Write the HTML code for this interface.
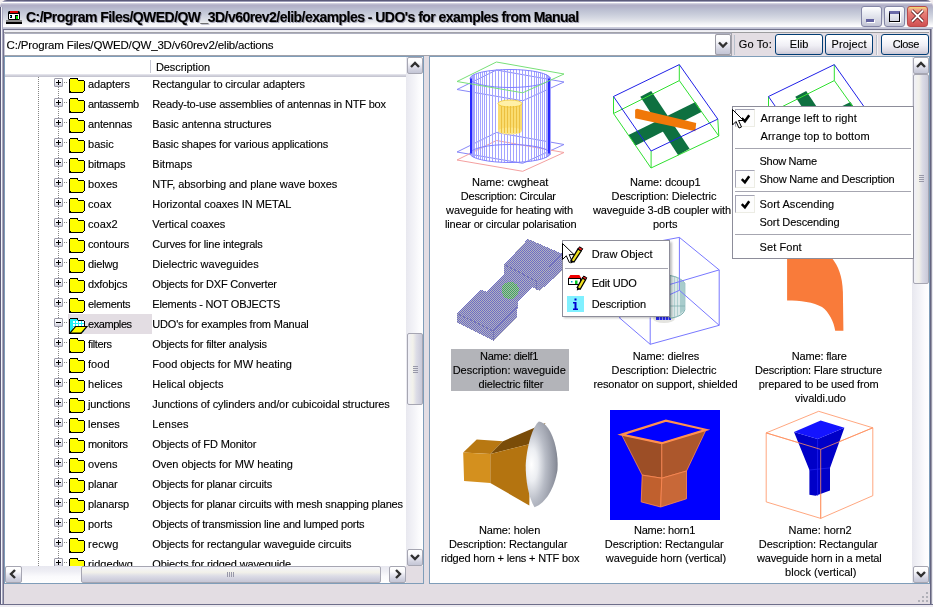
<!DOCTYPE html><html><head><meta charset="utf-8"><style>
*{margin:0;padding:0;box-sizing:border-box}
html,body{width:933px;height:607px;overflow:hidden;background:#f3eef0}
#root{position:absolute;left:0;top:0;width:933px;height:607px;will-change:transform}
body{position:relative;font-family:"Liberation Sans",sans-serif;font-size:11px;color:#000;-webkit-text-stroke:0.12px #000}
.a{position:absolute}
.t{white-space:pre;letter-spacing:-0.22px;line-height:20px}
.cap{position:absolute;text-align:center;white-space:pre;letter-spacing:-0.22px;line-height:14px}
.mi{white-space:pre;line-height:14px}
.btn{position:absolute;height:21px;border:1px solid #003c74;border-radius:3px;
 background:linear-gradient(to bottom,#ffffff 0,#fcfcfe 20%,#f0eff5 55%,#dcdae4 85%,#c9c6d4 100%);text-align:center;line-height:19px;white-space:pre}
.sb{position:absolute;border:1px solid #a6a6b2;border-radius:2px;
 background:linear-gradient(to bottom,#ffffff 0,#fafafc 30%,#e4e4ee 55%,#cfd0de 80%,#c4c6d6 100%)}
.sbh{position:absolute;border:1px solid #a6a6b2;border-radius:2px;
 background:linear-gradient(to right,#f0f0f8 0,#f2f1ea 35%,#dcdce6 60%,#c8c8d8 100%)}
.sbv{position:absolute;border:1px solid #a6a6b2;border-radius:2px;
 background:linear-gradient(to bottom,#f4f4fa 0,#f2f1ea 35%,#dcdce6 60%,#c6c6d6 100%)}
</style></head><body><div id="root">
<div class="a" style="left:0px;top:0px;width:933px;height:607px;background:#e3dde3;border-radius:7px 7px 0 0"></div>
<div class="a" style="left:0px;top:0px;width:933px;height:29px;background:linear-gradient(to bottom,#5b5b7a 0,#5b5b7a 1px,#9d9db8 1px,#9d9db8 2px,#ffffff 2px,#ffffff 3px,#dcdce6 3px,#b0aec6 5px,#b4b4ca 7px,#bcc0d2 10px,#c8ccda 14px,#d6d9e3 18px,#e2e4ea 21px,#eeeff3 23px,#f8f8fa 25px,#ffffff 27px,#d8d8e4 27px,#c0c2d4 28px,#c0c2d4 29px);border-radius:7px 7px 0 0"></div>
<div class="a" style="left:26px;top:8.5px;font-weight:bold;font-size:14px;line-height:16px;white-space:pre;text-shadow:1px 1px 0 #a0a0b4;letter-spacing:-0.54px">C:/Program Files/QWED/QW_3D/v60rev2/elib/examples - UDO's for examples from Manual</div>
<svg class="a" style="left:0;top:0" width="30" height="30">
<rect x="8" y="11" width="12" height="9" rx="1.5" fill="#000"/>
<rect x="10" y="11" width="8" height="2" fill="#e00000"/>
<rect x="9" y="14" width="10" height="5" fill="#fff"/>
<rect x="10" y="15" width="2" height="3" fill="#000"/>
<rect x="10" y="16" width="1" height="1" fill="#00d0ff"/>
<rect x="15" y="15" width="3" height="4" fill="#000"/>
<rect x="16" y="16" width="2" height="3" fill="#00e000"/>
<rect x="6" y="20" width="16" height="2" fill="#8a8a8a"/>
<rect x="6" y="22" width="16" height="2" fill="#000"/>
</svg>
<div class="a" style="left:861px;top:6px;width:21px;height:21px;border:1px solid #8486a6;border-radius:3px;background:linear-gradient(to bottom,#ffffff 0,#eceef4 30%,#d4d6e2 75%,#c0c2d2 100%)"><div class="a" style="left:4px;top:12px;width:8px;height:3px;background:#6262a0;box-shadow:1px 1px 0 #fff"></div></div>
<div class="a" style="left:884px;top:6px;width:21px;height:21px;border:1px solid #8486a6;border-radius:3px;background:linear-gradient(to bottom,#ffffff 0,#eceef4 30%,#d4d6e2 75%,#c0c2d2 100%)"><div class="a" style="left:4px;top:4px;width:11px;height:11px;border:1px solid #000;border-top:3px solid #6a6aa8;box-shadow:1px 1px 0 #fff"></div></div>
<div class="a" style="left:907px;top:6px;width:21px;height:21px;border:1px solid #b84a4a;border-radius:3px;background:linear-gradient(to bottom,#f4e070 0,#f0a888 12%,#e88078 30%,#dc6464 70%,#d05050 100%)"><svg class="a" style="left:0;top:0" width="19" height="19"><path d="M4 3.5 L15 14.5 M15 3.5 L4 14.5" stroke="#400000" stroke-width="3.2"/><path d="M4 3.5 L15 14.5 M15 3.5 L4 14.5" stroke="#fff" stroke-width="2"/></svg></div>
<div class="a" style="left:0px;top:7px;width:1px;height:600px;background:#5b5b7a"></div>
<div class="a" style="left:1px;top:7px;width:1px;height:600px;background:#f4f4f8"></div>
<div class="a" style="left:2px;top:7px;width:1px;height:600px;background:#a8a8c0"></div>
<div class="a" style="left:3px;top:29px;width:1px;height:576px;background:#74748e"></div>
<div class="a" style="left:4px;top:30px;width:1px;height:26px;background:#c8c8d8"></div>
<div class="a" style="left:929px;top:29px;width:1px;height:575px;background:#e3dde3"></div>
<div class="a" style="left:930px;top:29px;width:1px;height:576px;background:#646480"></div>
<div class="a" style="left:931px;top:29px;width:1px;height:576px;background:#9898a8"></div>
<div class="a" style="left:932px;top:29px;width:1px;height:578px;background:#e8e8f0"></div>
<div class="a" style="left:3px;top:29px;width:927px;height:1px;background:#74748e"></div>
<div class="a" style="left:4px;top:30px;width:925px;height:1px;background:#ececf2"></div>
<div class="a" style="left:4px;top:31px;width:925px;height:1px;background:#f2f2f6"></div>
<div class="a" style="left:4px;top:32px;width:925px;height:1px;background:#9c9c9e"></div>
<div class="a" style="left:0px;top:604px;width:933px;height:1px;background:#6e6e8a"></div>
<div class="a" style="left:0px;top:605px;width:933px;height:2px;background:#eceaf0"></div>
<div class="a" style="left:4px;top:32px;width:728px;height:1px;background:#a2a2aa"></div>
<div class="a" style="left:4px;top:33px;width:728px;height:1px;background:#cfcfd6"></div>
<div class="a" style="left:5px;top:33px;width:726px;height:1px;background:#aeb0c0"></div>
<div class="a" style="left:5px;top:34px;width:710px;height:21px;background:#fff"></div>
<div class="a" style="left:731px;top:32px;width:1px;height:24px;background:#a2a2aa"></div>
<div class="a" style="left:4px;top:55px;width:728px;height:1px;background:#a2a2aa"></div>
<div class="a" style="left:6.5px;top:34px;line-height:22px;font-size:11.5px;white-space:pre;letter-spacing:-0.15px">C:/Program Files/QWED/QW_3D/v60rev2/elib/actions</div>
<div class="sb" style="left:715px;top:34px;width:16px;height:21px;border-color:#9c9ca6"></div>
<svg class="a" style="left:715px;top:34px" width="16" height="21"><path d="M4 8.5 L8 12.5 L12 8.5" fill="none" stroke="#303030" stroke-width="2.4"/></svg>
<div class="a" style="left:734px;top:35px;width:1px;height:20px;background:#b8c0cc"></div>
<div class="btn" style="left:775px;top:34px;width:48px"></div>
<div class="btn" style="left:825px;top:34px;width:48px"></div>
<div class="a" style="left:876px;top:35px;width:1px;height:20px;background:#b8c0cc"></div>
<div class="a" style="left:877px;top:35px;width:1px;height:20px;background:#f4f2f4"></div>
<div class="btn" style="left:881px;top:34px;width:48px"></div>
<div class="a" style="left:738.7px;top:36.5px;line-height:14px;white-space:pre;letter-spacing:0.16px">Go To:</div>
<div class="a" style="left:789.7px;top:36.5px;line-height:14px;white-space:pre;letter-spacing:0.133px">Elib</div>
<div class="a" style="left:831.5px;top:36.5px;line-height:14px;white-space:pre;letter-spacing:0.133px">Project</div>
<div class="a" style="left:892.7px;top:36.5px;line-height:14px;white-space:pre;letter-spacing:-0.375px">Close</div>
<div class="a" style="left:4px;top:56px;width:420px;height:528px;background:#fff;border:1px solid #7f9db9"></div>
<div class="a" style="left:5px;top:57px;width:401px;height:17px;background:#fff"></div>
<div class="a" style="left:5px;top:74px;width:401px;height:1px;background:#e2e2ea"></div>
<div class="a" style="left:5px;top:75px;width:401px;height:1px;background:#d2d2dc"></div>
<div class="a" style="left:5px;top:76px;width:401px;height:1px;background:#c6c6d2"></div>
<div class="a" style="left:150px;top:60px;width:1px;height:13px;background:#c6c8d4"></div>
<div class="a" style="left:156px;top:59.5px;line-height:14px;white-space:pre;letter-spacing:-0.1px">Description</div>
<div class="a" style="left:5px;top:77px;width:402px;height:489px;overflow:hidden">
<svg class="a" style="left:0;top:0" width="402" height="489" shape-rendering="crispEdges"><path d="M33 0h1v1h-1z M33 2h1v1h-1z M33 4h1v1h-1z M33 6h1v1h-1z M33 8h1v1h-1z M33 10h1v1h-1z M33 12h1v1h-1z M33 14h1v1h-1z M33 16h1v1h-1z M33 18h1v1h-1z M33 20h1v1h-1z M33 22h1v1h-1z M33 24h1v1h-1z M33 26h1v1h-1z M33 28h1v1h-1z M33 30h1v1h-1z M33 32h1v1h-1z M33 34h1v1h-1z M33 36h1v1h-1z M33 38h1v1h-1z M33 40h1v1h-1z M33 42h1v1h-1z M33 44h1v1h-1z M33 46h1v1h-1z M33 48h1v1h-1z M33 50h1v1h-1z M33 52h1v1h-1z M33 54h1v1h-1z M33 56h1v1h-1z M33 58h1v1h-1z M33 60h1v1h-1z M33 62h1v1h-1z M33 64h1v1h-1z M33 66h1v1h-1z M33 68h1v1h-1z M33 70h1v1h-1z M33 72h1v1h-1z M33 74h1v1h-1z M33 76h1v1h-1z M33 78h1v1h-1z M33 80h1v1h-1z M33 82h1v1h-1z M33 84h1v1h-1z M33 86h1v1h-1z M33 88h1v1h-1z M33 90h1v1h-1z M33 92h1v1h-1z M33 94h1v1h-1z M33 96h1v1h-1z M33 98h1v1h-1z M33 100h1v1h-1z M33 102h1v1h-1z M33 104h1v1h-1z M33 106h1v1h-1z M33 108h1v1h-1z M33 110h1v1h-1z M33 112h1v1h-1z M33 114h1v1h-1z M33 116h1v1h-1z M33 118h1v1h-1z M33 120h1v1h-1z M33 122h1v1h-1z M33 124h1v1h-1z M33 126h1v1h-1z M33 128h1v1h-1z M33 130h1v1h-1z M33 132h1v1h-1z M33 134h1v1h-1z M33 136h1v1h-1z M33 138h1v1h-1z M33 140h1v1h-1z M33 142h1v1h-1z M33 144h1v1h-1z M33 146h1v1h-1z M33 148h1v1h-1z M33 150h1v1h-1z M33 152h1v1h-1z M33 154h1v1h-1z M33 156h1v1h-1z M33 158h1v1h-1z M33 160h1v1h-1z M33 162h1v1h-1z M33 164h1v1h-1z M33 166h1v1h-1z M33 168h1v1h-1z M33 170h1v1h-1z M33 172h1v1h-1z M33 174h1v1h-1z M33 176h1v1h-1z M33 178h1v1h-1z M33 180h1v1h-1z M33 182h1v1h-1z M33 184h1v1h-1z M33 186h1v1h-1z M33 188h1v1h-1z M33 190h1v1h-1z M33 192h1v1h-1z M33 194h1v1h-1z M33 196h1v1h-1z M33 198h1v1h-1z M33 200h1v1h-1z M33 202h1v1h-1z M33 204h1v1h-1z M33 206h1v1h-1z M33 208h1v1h-1z M33 210h1v1h-1z M33 212h1v1h-1z M33 214h1v1h-1z M33 216h1v1h-1z M33 218h1v1h-1z M33 220h1v1h-1z M33 222h1v1h-1z M33 224h1v1h-1z M33 226h1v1h-1z M33 228h1v1h-1z M33 230h1v1h-1z M33 232h1v1h-1z M33 234h1v1h-1z M33 236h1v1h-1z M33 238h1v1h-1z M33 240h1v1h-1z M33 242h1v1h-1z M33 244h1v1h-1z M33 246h1v1h-1z M33 248h1v1h-1z M33 250h1v1h-1z M33 252h1v1h-1z M33 254h1v1h-1z M33 256h1v1h-1z M33 258h1v1h-1z M33 260h1v1h-1z M33 262h1v1h-1z M33 264h1v1h-1z M33 266h1v1h-1z M33 268h1v1h-1z M33 270h1v1h-1z M33 272h1v1h-1z M33 274h1v1h-1z M33 276h1v1h-1z M33 278h1v1h-1z M33 280h1v1h-1z M33 282h1v1h-1z M33 284h1v1h-1z M33 286h1v1h-1z M33 288h1v1h-1z M33 290h1v1h-1z M33 292h1v1h-1z M33 294h1v1h-1z M33 296h1v1h-1z M33 298h1v1h-1z M33 300h1v1h-1z M33 302h1v1h-1z M33 304h1v1h-1z M33 306h1v1h-1z M33 308h1v1h-1z M33 310h1v1h-1z M33 312h1v1h-1z M33 314h1v1h-1z M33 316h1v1h-1z M33 318h1v1h-1z M33 320h1v1h-1z M33 322h1v1h-1z M33 324h1v1h-1z M33 326h1v1h-1z M33 328h1v1h-1z M33 330h1v1h-1z M33 332h1v1h-1z M33 334h1v1h-1z M33 336h1v1h-1z M33 338h1v1h-1z M33 340h1v1h-1z M33 342h1v1h-1z M33 344h1v1h-1z M33 346h1v1h-1z M33 348h1v1h-1z M33 350h1v1h-1z M33 352h1v1h-1z M33 354h1v1h-1z M33 356h1v1h-1z M33 358h1v1h-1z M33 360h1v1h-1z M33 362h1v1h-1z M33 364h1v1h-1z M33 366h1v1h-1z M33 368h1v1h-1z M33 370h1v1h-1z M33 372h1v1h-1z M33 374h1v1h-1z M33 376h1v1h-1z M33 378h1v1h-1z M33 380h1v1h-1z M33 382h1v1h-1z M33 384h1v1h-1z M33 386h1v1h-1z M33 388h1v1h-1z M33 390h1v1h-1z M33 392h1v1h-1z M33 394h1v1h-1z M33 396h1v1h-1z M33 398h1v1h-1z M33 400h1v1h-1z M33 402h1v1h-1z M33 404h1v1h-1z M33 406h1v1h-1z M33 408h1v1h-1z M33 410h1v1h-1z M33 412h1v1h-1z M33 414h1v1h-1z M33 416h1v1h-1z M33 418h1v1h-1z M33 420h1v1h-1z M33 422h1v1h-1z M33 424h1v1h-1z M33 426h1v1h-1z M33 428h1v1h-1z M33 430h1v1h-1z M33 432h1v1h-1z M33 434h1v1h-1z M33 436h1v1h-1z M33 438h1v1h-1z M33 440h1v1h-1z M33 442h1v1h-1z M33 444h1v1h-1z M33 446h1v1h-1z M33 448h1v1h-1z M33 450h1v1h-1z M33 452h1v1h-1z M33 454h1v1h-1z M33 456h1v1h-1z M33 458h1v1h-1z M33 460h1v1h-1z M33 462h1v1h-1z M33 464h1v1h-1z M33 466h1v1h-1z M33 468h1v1h-1z M33 470h1v1h-1z M33 472h1v1h-1z M33 474h1v1h-1z M33 476h1v1h-1z M33 478h1v1h-1z M33 480h1v1h-1z M33 482h1v1h-1z M33 484h1v1h-1z M33 486h1v1h-1z M33 488h1v1h-1z M59 5h1v1h-1z M61 5h1v1h-1z M53 10h1v1h-1z M53 12h1v1h-1z M53 14h1v1h-1z M53 16h1v1h-1z M53 18h1v1h-1z M53 20h1v1h-1z M59 25h1v1h-1z M61 25h1v1h-1z M53 30h1v1h-1z M53 32h1v1h-1z M53 34h1v1h-1z M53 36h1v1h-1z M53 38h1v1h-1z M53 40h1v1h-1z M59 45h1v1h-1z M61 45h1v1h-1z M53 50h1v1h-1z M53 52h1v1h-1z M53 54h1v1h-1z M53 56h1v1h-1z M53 58h1v1h-1z M53 60h1v1h-1z M59 65h1v1h-1z M61 65h1v1h-1z M53 70h1v1h-1z M53 72h1v1h-1z M53 74h1v1h-1z M53 76h1v1h-1z M53 78h1v1h-1z M53 80h1v1h-1z M59 85h1v1h-1z M61 85h1v1h-1z M53 90h1v1h-1z M53 92h1v1h-1z M53 94h1v1h-1z M53 96h1v1h-1z M53 98h1v1h-1z M53 100h1v1h-1z M59 105h1v1h-1z M61 105h1v1h-1z M53 110h1v1h-1z M53 112h1v1h-1z M53 114h1v1h-1z M53 116h1v1h-1z M53 118h1v1h-1z M53 120h1v1h-1z M59 125h1v1h-1z M61 125h1v1h-1z M53 130h1v1h-1z M53 132h1v1h-1z M53 134h1v1h-1z M53 136h1v1h-1z M53 138h1v1h-1z M53 140h1v1h-1z M59 145h1v1h-1z M61 145h1v1h-1z M53 150h1v1h-1z M53 152h1v1h-1z M53 154h1v1h-1z M53 156h1v1h-1z M53 158h1v1h-1z M53 160h1v1h-1z M59 165h1v1h-1z M61 165h1v1h-1z M53 170h1v1h-1z M53 172h1v1h-1z M53 174h1v1h-1z M53 176h1v1h-1z M53 178h1v1h-1z M53 180h1v1h-1z M59 185h1v1h-1z M61 185h1v1h-1z M53 190h1v1h-1z M53 192h1v1h-1z M53 194h1v1h-1z M53 196h1v1h-1z M53 198h1v1h-1z M53 200h1v1h-1z M59 205h1v1h-1z M61 205h1v1h-1z M53 210h1v1h-1z M53 212h1v1h-1z M53 214h1v1h-1z M53 216h1v1h-1z M53 218h1v1h-1z M53 220h1v1h-1z M59 225h1v1h-1z M61 225h1v1h-1z M53 230h1v1h-1z M53 232h1v1h-1z M53 234h1v1h-1z M53 236h1v1h-1z M53 238h1v1h-1z M53 240h1v1h-1z M59 245h1v1h-1z M61 245h1v1h-1z M53 250h1v1h-1z M53 252h1v1h-1z M53 254h1v1h-1z M53 256h1v1h-1z M53 258h1v1h-1z M53 260h1v1h-1z M59 265h1v1h-1z M61 265h1v1h-1z M53 270h1v1h-1z M53 272h1v1h-1z M53 274h1v1h-1z M53 276h1v1h-1z M53 278h1v1h-1z M53 280h1v1h-1z M59 285h1v1h-1z M61 285h1v1h-1z M53 290h1v1h-1z M53 292h1v1h-1z M53 294h1v1h-1z M53 296h1v1h-1z M53 298h1v1h-1z M53 300h1v1h-1z M59 305h1v1h-1z M61 305h1v1h-1z M53 310h1v1h-1z M53 312h1v1h-1z M53 314h1v1h-1z M53 316h1v1h-1z M53 318h1v1h-1z M53 320h1v1h-1z M59 325h1v1h-1z M61 325h1v1h-1z M53 330h1v1h-1z M53 332h1v1h-1z M53 334h1v1h-1z M53 336h1v1h-1z M53 338h1v1h-1z M53 340h1v1h-1z M59 345h1v1h-1z M61 345h1v1h-1z M53 350h1v1h-1z M53 352h1v1h-1z M53 354h1v1h-1z M53 356h1v1h-1z M53 358h1v1h-1z M53 360h1v1h-1z M59 365h1v1h-1z M61 365h1v1h-1z M53 370h1v1h-1z M53 372h1v1h-1z M53 374h1v1h-1z M53 376h1v1h-1z M53 378h1v1h-1z M53 380h1v1h-1z M59 385h1v1h-1z M61 385h1v1h-1z M53 390h1v1h-1z M53 392h1v1h-1z M53 394h1v1h-1z M53 396h1v1h-1z M53 398h1v1h-1z M53 400h1v1h-1z M59 405h1v1h-1z M61 405h1v1h-1z M53 410h1v1h-1z M53 412h1v1h-1z M53 414h1v1h-1z M53 416h1v1h-1z M53 418h1v1h-1z M53 420h1v1h-1z M59 425h1v1h-1z M61 425h1v1h-1z M53 430h1v1h-1z M53 432h1v1h-1z M53 434h1v1h-1z M53 436h1v1h-1z M53 438h1v1h-1z M53 440h1v1h-1z M59 445h1v1h-1z M61 445h1v1h-1z M53 450h1v1h-1z M53 452h1v1h-1z M53 454h1v1h-1z M53 456h1v1h-1z M53 458h1v1h-1z M53 460h1v1h-1z M59 465h1v1h-1z M61 465h1v1h-1z M53 470h1v1h-1z M53 472h1v1h-1z M53 474h1v1h-1z M53 476h1v1h-1z M53 478h1v1h-1z M53 480h1v1h-1z M59 485h1v1h-1z M61 485h1v1h-1z M53 490h1v1h-1z M53 492h1v1h-1z M53 494h1v1h-1z M53 496h1v1h-1z M53 498h1v1h-1z M53 500h1v1h-1z" fill="#848484"/></svg>
<div class="a" style="left:49px;top:1px;width:9px;height:9px;border:1px solid #9c9caa;border-radius:1px;background:linear-gradient(to bottom,#fff 0,#f4f4f8 45%,#cfcfdc 100%)"><div class="a" style="left:1px;top:3px;width:5px;height:1px;background:#000"></div><div class="a" style="left:3px;top:1px;width:1px;height:5px;background:#000"></div></div>
<svg class="a" style="left:64px;top:1px" width="16" height="16" shape-rendering="crispEdges"><rect x="1" y="0" width="8" height="1" fill="#000"/><rect x="0" y="1" width="1" height="14" fill="#000"/><rect x="8" y="1" width="1" height="1" fill="#000"/><rect x="9" y="2" width="6" height="1" fill="#000"/><rect x="15" y="3" width="1" height="10" fill="#000"/><rect x="14" y="13" width="1" height="1" fill="#000"/><rect x="1" y="14" width="13" height="1" fill="#000"/><rect x="1" y="13" width="1" height="1" fill="#000"/><rect x="1" y="1" width="7" height="1" fill="#ff0"/><rect x="1" y="2" width="8" height="1" fill="#ff0"/><rect x="1" y="3" width="14" height="10" fill="#ff0"/><rect x="2" y="13" width="12" height="1" fill="#ff0"/></svg>
<div class="a t" style="left:83px;top:-3px;letter-spacing:-0.129px">adapters</div>
<div class="a t" style="left:147.3px;top:-3px;letter-spacing:-0.103px">Rectangular to circular adapters</div>
<div class="a" style="left:49px;top:21px;width:9px;height:9px;border:1px solid #9c9caa;border-radius:1px;background:linear-gradient(to bottom,#fff 0,#f4f4f8 45%,#cfcfdc 100%)"><div class="a" style="left:1px;top:3px;width:5px;height:1px;background:#000"></div><div class="a" style="left:3px;top:1px;width:1px;height:5px;background:#000"></div></div>
<svg class="a" style="left:64px;top:21px" width="16" height="16" shape-rendering="crispEdges"><rect x="1" y="0" width="8" height="1" fill="#000"/><rect x="0" y="1" width="1" height="14" fill="#000"/><rect x="8" y="1" width="1" height="1" fill="#000"/><rect x="9" y="2" width="6" height="1" fill="#000"/><rect x="15" y="3" width="1" height="10" fill="#000"/><rect x="14" y="13" width="1" height="1" fill="#000"/><rect x="1" y="14" width="13" height="1" fill="#000"/><rect x="1" y="13" width="1" height="1" fill="#000"/><rect x="1" y="1" width="7" height="1" fill="#ff0"/><rect x="1" y="2" width="8" height="1" fill="#ff0"/><rect x="1" y="3" width="14" height="10" fill="#ff0"/><rect x="2" y="13" width="12" height="1" fill="#ff0"/></svg>
<div class="a t" style="left:83px;top:17px;letter-spacing:-0.325px">antassemb</div>
<div class="a t" style="left:147.3px;top:17px;letter-spacing:-0.173px">Ready-to-use assemblies of antennas in NTF box</div>
<div class="a" style="left:49px;top:41px;width:9px;height:9px;border:1px solid #9c9caa;border-radius:1px;background:linear-gradient(to bottom,#fff 0,#f4f4f8 45%,#cfcfdc 100%)"><div class="a" style="left:1px;top:3px;width:5px;height:1px;background:#000"></div><div class="a" style="left:3px;top:1px;width:1px;height:5px;background:#000"></div></div>
<svg class="a" style="left:64px;top:41px" width="16" height="16" shape-rendering="crispEdges"><rect x="1" y="0" width="8" height="1" fill="#000"/><rect x="0" y="1" width="1" height="14" fill="#000"/><rect x="8" y="1" width="1" height="1" fill="#000"/><rect x="9" y="2" width="6" height="1" fill="#000"/><rect x="15" y="3" width="1" height="10" fill="#000"/><rect x="14" y="13" width="1" height="1" fill="#000"/><rect x="1" y="14" width="13" height="1" fill="#000"/><rect x="1" y="13" width="1" height="1" fill="#000"/><rect x="1" y="1" width="7" height="1" fill="#ff0"/><rect x="1" y="2" width="8" height="1" fill="#ff0"/><rect x="1" y="3" width="14" height="10" fill="#ff0"/><rect x="2" y="13" width="12" height="1" fill="#ff0"/></svg>
<div class="a t" style="left:83px;top:37px;letter-spacing:-0.143px">antennas</div>
<div class="a t" style="left:147.3px;top:37px;letter-spacing:-0.083px">Basic antenna structures</div>
<div class="a" style="left:49px;top:61px;width:9px;height:9px;border:1px solid #9c9caa;border-radius:1px;background:linear-gradient(to bottom,#fff 0,#f4f4f8 45%,#cfcfdc 100%)"><div class="a" style="left:1px;top:3px;width:5px;height:1px;background:#000"></div><div class="a" style="left:3px;top:1px;width:1px;height:5px;background:#000"></div></div>
<svg class="a" style="left:64px;top:61px" width="16" height="16" shape-rendering="crispEdges"><rect x="1" y="0" width="8" height="1" fill="#000"/><rect x="0" y="1" width="1" height="14" fill="#000"/><rect x="8" y="1" width="1" height="1" fill="#000"/><rect x="9" y="2" width="6" height="1" fill="#000"/><rect x="15" y="3" width="1" height="10" fill="#000"/><rect x="14" y="13" width="1" height="1" fill="#000"/><rect x="1" y="14" width="13" height="1" fill="#000"/><rect x="1" y="13" width="1" height="1" fill="#000"/><rect x="1" y="1" width="7" height="1" fill="#ff0"/><rect x="1" y="2" width="8" height="1" fill="#ff0"/><rect x="1" y="3" width="14" height="10" fill="#ff0"/><rect x="2" y="13" width="12" height="1" fill="#ff0"/></svg>
<div class="a t" style="left:83px;top:57px;letter-spacing:0.025px">basic</div>
<div class="a t" style="left:147.3px;top:57px;letter-spacing:-0.139px">Basic shapes for various applications</div>
<div class="a" style="left:49px;top:81px;width:9px;height:9px;border:1px solid #9c9caa;border-radius:1px;background:linear-gradient(to bottom,#fff 0,#f4f4f8 45%,#cfcfdc 100%)"><div class="a" style="left:1px;top:3px;width:5px;height:1px;background:#000"></div><div class="a" style="left:3px;top:1px;width:1px;height:5px;background:#000"></div></div>
<svg class="a" style="left:64px;top:81px" width="16" height="16" shape-rendering="crispEdges"><rect x="1" y="0" width="8" height="1" fill="#000"/><rect x="0" y="1" width="1" height="14" fill="#000"/><rect x="8" y="1" width="1" height="1" fill="#000"/><rect x="9" y="2" width="6" height="1" fill="#000"/><rect x="15" y="3" width="1" height="10" fill="#000"/><rect x="14" y="13" width="1" height="1" fill="#000"/><rect x="1" y="14" width="13" height="1" fill="#000"/><rect x="1" y="13" width="1" height="1" fill="#000"/><rect x="1" y="1" width="7" height="1" fill="#ff0"/><rect x="1" y="2" width="8" height="1" fill="#ff0"/><rect x="1" y="3" width="14" height="10" fill="#ff0"/><rect x="2" y="13" width="12" height="1" fill="#ff0"/></svg>
<div class="a t" style="left:83px;top:77px;letter-spacing:-0.167px">bitmaps</div>
<div class="a t" style="left:147.3px;top:77px;letter-spacing:0.017px">Bitmaps</div>
<div class="a" style="left:49px;top:101px;width:9px;height:9px;border:1px solid #9c9caa;border-radius:1px;background:linear-gradient(to bottom,#fff 0,#f4f4f8 45%,#cfcfdc 100%)"><div class="a" style="left:1px;top:3px;width:5px;height:1px;background:#000"></div><div class="a" style="left:3px;top:1px;width:1px;height:5px;background:#000"></div></div>
<svg class="a" style="left:64px;top:101px" width="16" height="16" shape-rendering="crispEdges"><rect x="1" y="0" width="8" height="1" fill="#000"/><rect x="0" y="1" width="1" height="14" fill="#000"/><rect x="8" y="1" width="1" height="1" fill="#000"/><rect x="9" y="2" width="6" height="1" fill="#000"/><rect x="15" y="3" width="1" height="10" fill="#000"/><rect x="14" y="13" width="1" height="1" fill="#000"/><rect x="1" y="14" width="13" height="1" fill="#000"/><rect x="1" y="13" width="1" height="1" fill="#000"/><rect x="1" y="1" width="7" height="1" fill="#ff0"/><rect x="1" y="2" width="8" height="1" fill="#ff0"/><rect x="1" y="3" width="14" height="10" fill="#ff0"/><rect x="2" y="13" width="12" height="1" fill="#ff0"/></svg>
<div class="a t" style="left:83px;top:97px;letter-spacing:0.05px">boxes</div>
<div class="a t" style="left:147.3px;top:97px;letter-spacing:-0.062px">NTF, absorbing and plane wave boxes</div>
<div class="a" style="left:49px;top:121px;width:9px;height:9px;border:1px solid #9c9caa;border-radius:1px;background:linear-gradient(to bottom,#fff 0,#f4f4f8 45%,#cfcfdc 100%)"><div class="a" style="left:1px;top:3px;width:5px;height:1px;background:#000"></div><div class="a" style="left:3px;top:1px;width:1px;height:5px;background:#000"></div></div>
<svg class="a" style="left:64px;top:121px" width="16" height="16" shape-rendering="crispEdges"><rect x="1" y="0" width="8" height="1" fill="#000"/><rect x="0" y="1" width="1" height="14" fill="#000"/><rect x="8" y="1" width="1" height="1" fill="#000"/><rect x="9" y="2" width="6" height="1" fill="#000"/><rect x="15" y="3" width="1" height="10" fill="#000"/><rect x="14" y="13" width="1" height="1" fill="#000"/><rect x="1" y="14" width="13" height="1" fill="#000"/><rect x="1" y="13" width="1" height="1" fill="#000"/><rect x="1" y="1" width="7" height="1" fill="#ff0"/><rect x="1" y="2" width="8" height="1" fill="#ff0"/><rect x="1" y="3" width="14" height="10" fill="#ff0"/><rect x="2" y="13" width="12" height="1" fill="#ff0"/></svg>
<div class="a t" style="left:83px;top:117px;letter-spacing:0.1px">coax</div>
<div class="a t" style="left:147.3px;top:117px;letter-spacing:-0.056px">Horizontal coaxes IN METAL</div>
<div class="a" style="left:49px;top:141px;width:9px;height:9px;border:1px solid #9c9caa;border-radius:1px;background:linear-gradient(to bottom,#fff 0,#f4f4f8 45%,#cfcfdc 100%)"><div class="a" style="left:1px;top:3px;width:5px;height:1px;background:#000"></div><div class="a" style="left:3px;top:1px;width:1px;height:5px;background:#000"></div></div>
<svg class="a" style="left:64px;top:141px" width="16" height="16" shape-rendering="crispEdges"><rect x="1" y="0" width="8" height="1" fill="#000"/><rect x="0" y="1" width="1" height="14" fill="#000"/><rect x="8" y="1" width="1" height="1" fill="#000"/><rect x="9" y="2" width="6" height="1" fill="#000"/><rect x="15" y="3" width="1" height="10" fill="#000"/><rect x="14" y="13" width="1" height="1" fill="#000"/><rect x="1" y="14" width="13" height="1" fill="#000"/><rect x="1" y="13" width="1" height="1" fill="#000"/><rect x="1" y="1" width="7" height="1" fill="#ff0"/><rect x="1" y="2" width="8" height="1" fill="#ff0"/><rect x="1" y="3" width="14" height="10" fill="#ff0"/><rect x="2" y="13" width="12" height="1" fill="#ff0"/></svg>
<div class="a t" style="left:83px;top:137px;letter-spacing:0.05px">coax2</div>
<div class="a t" style="left:147.3px;top:137px;letter-spacing:-0.071px">Vertical coaxes</div>
<div class="a" style="left:49px;top:161px;width:9px;height:9px;border:1px solid #9c9caa;border-radius:1px;background:linear-gradient(to bottom,#fff 0,#f4f4f8 45%,#cfcfdc 100%)"><div class="a" style="left:1px;top:3px;width:5px;height:1px;background:#000"></div><div class="a" style="left:3px;top:1px;width:1px;height:5px;background:#000"></div></div>
<svg class="a" style="left:64px;top:161px" width="16" height="16" shape-rendering="crispEdges"><rect x="1" y="0" width="8" height="1" fill="#000"/><rect x="0" y="1" width="1" height="14" fill="#000"/><rect x="8" y="1" width="1" height="1" fill="#000"/><rect x="9" y="2" width="6" height="1" fill="#000"/><rect x="15" y="3" width="1" height="10" fill="#000"/><rect x="14" y="13" width="1" height="1" fill="#000"/><rect x="1" y="14" width="13" height="1" fill="#000"/><rect x="1" y="13" width="1" height="1" fill="#000"/><rect x="1" y="1" width="7" height="1" fill="#ff0"/><rect x="1" y="2" width="8" height="1" fill="#ff0"/><rect x="1" y="3" width="14" height="10" fill="#ff0"/><rect x="2" y="13" width="12" height="1" fill="#ff0"/></svg>
<div class="a t" style="left:83px;top:157px;letter-spacing:-0.129px">contours</div>
<div class="a t" style="left:147.3px;top:157px;letter-spacing:-0.208px">Curves for line integrals</div>
<div class="a" style="left:49px;top:181px;width:9px;height:9px;border:1px solid #9c9caa;border-radius:1px;background:linear-gradient(to bottom,#fff 0,#f4f4f8 45%,#cfcfdc 100%)"><div class="a" style="left:1px;top:3px;width:5px;height:1px;background:#000"></div><div class="a" style="left:3px;top:1px;width:1px;height:5px;background:#000"></div></div>
<svg class="a" style="left:64px;top:181px" width="16" height="16" shape-rendering="crispEdges"><rect x="1" y="0" width="8" height="1" fill="#000"/><rect x="0" y="1" width="1" height="14" fill="#000"/><rect x="8" y="1" width="1" height="1" fill="#000"/><rect x="9" y="2" width="6" height="1" fill="#000"/><rect x="15" y="3" width="1" height="10" fill="#000"/><rect x="14" y="13" width="1" height="1" fill="#000"/><rect x="1" y="14" width="13" height="1" fill="#000"/><rect x="1" y="13" width="1" height="1" fill="#000"/><rect x="1" y="1" width="7" height="1" fill="#ff0"/><rect x="1" y="2" width="8" height="1" fill="#ff0"/><rect x="1" y="3" width="14" height="10" fill="#ff0"/><rect x="2" y="13" width="12" height="1" fill="#ff0"/></svg>
<div class="a t" style="left:83px;top:177px;letter-spacing:-0.16px">dielwg</div>
<div class="a t" style="left:147.3px;top:177px;letter-spacing:0.0px">Dielectric waveguides</div>
<div class="a" style="left:49px;top:201px;width:9px;height:9px;border:1px solid #9c9caa;border-radius:1px;background:linear-gradient(to bottom,#fff 0,#f4f4f8 45%,#cfcfdc 100%)"><div class="a" style="left:1px;top:3px;width:5px;height:1px;background:#000"></div><div class="a" style="left:3px;top:1px;width:1px;height:5px;background:#000"></div></div>
<svg class="a" style="left:64px;top:201px" width="16" height="16" shape-rendering="crispEdges"><rect x="1" y="0" width="8" height="1" fill="#000"/><rect x="0" y="1" width="1" height="14" fill="#000"/><rect x="8" y="1" width="1" height="1" fill="#000"/><rect x="9" y="2" width="6" height="1" fill="#000"/><rect x="15" y="3" width="1" height="10" fill="#000"/><rect x="14" y="13" width="1" height="1" fill="#000"/><rect x="1" y="14" width="13" height="1" fill="#000"/><rect x="1" y="13" width="1" height="1" fill="#000"/><rect x="1" y="1" width="7" height="1" fill="#ff0"/><rect x="1" y="2" width="8" height="1" fill="#ff0"/><rect x="1" y="3" width="14" height="10" fill="#ff0"/><rect x="2" y="13" width="12" height="1" fill="#ff0"/></svg>
<div class="a t" style="left:83px;top:197px;letter-spacing:-0.129px">dxfobjcs</div>
<div class="a t" style="left:147.3px;top:197px;letter-spacing:-0.204px">Objects for DXF Converter</div>
<div class="a" style="left:49px;top:221px;width:9px;height:9px;border:1px solid #9c9caa;border-radius:1px;background:linear-gradient(to bottom,#fff 0,#f4f4f8 45%,#cfcfdc 100%)"><div class="a" style="left:1px;top:3px;width:5px;height:1px;background:#000"></div><div class="a" style="left:3px;top:1px;width:1px;height:5px;background:#000"></div></div>
<svg class="a" style="left:64px;top:221px" width="16" height="16" shape-rendering="crispEdges"><rect x="1" y="0" width="8" height="1" fill="#000"/><rect x="0" y="1" width="1" height="14" fill="#000"/><rect x="8" y="1" width="1" height="1" fill="#000"/><rect x="9" y="2" width="6" height="1" fill="#000"/><rect x="15" y="3" width="1" height="10" fill="#000"/><rect x="14" y="13" width="1" height="1" fill="#000"/><rect x="1" y="14" width="13" height="1" fill="#000"/><rect x="1" y="13" width="1" height="1" fill="#000"/><rect x="1" y="1" width="7" height="1" fill="#ff0"/><rect x="1" y="2" width="8" height="1" fill="#ff0"/><rect x="1" y="3" width="14" height="10" fill="#ff0"/><rect x="2" y="13" width="12" height="1" fill="#ff0"/></svg>
<div class="a t" style="left:83px;top:217px;letter-spacing:-0.3px">elements</div>
<div class="a t" style="left:147.3px;top:217px;letter-spacing:-0.214px">Elements - NOT OBJECTS</div>
<div class="a" style="left:49px;top:241px;width:9px;height:9px;border:1px solid #9c9caa;border-radius:1px;background:linear-gradient(to bottom,#fff 0,#f4f4f8 45%,#cfcfdc 100%)"><div class="a" style="left:1px;top:3px;width:5px;height:1px;background:#000"></div></div>
<div class="a" style="left:63px;top:237px;width:84px;height:20px;background:#e3dde3"></div>
<svg class="a" style="left:64px;top:241px" width="19" height="16" shape-rendering="crispEdges"><rect x="1" y="0" width="8" height="1" fill="#000"/><rect x="0" y="1" width="1" height="15" fill="#000"/><rect x="8" y="1" width="1" height="1" fill="#000"/><rect x="9" y="2" width="6" height="1" fill="#000"/><rect x="15" y="3" width="1" height="6" fill="#000"/><rect x="1" y="1" width="7" height="1" fill="#20f0f8"/><rect x="1" y="2" width="8" height="1" fill="#20f0f8"/><rect x="1" y="3" width="14" height="11" fill="#20f0f8"/><rect x="4" y="3" width="2" height="2" fill="#fff"/><rect x="4" y="6" width="2" height="2" fill="#fff"/><rect x="4" y="9" width="2" height="2" fill="#fff"/><rect x="7" y="3" width="2" height="2" fill="#fff"/><rect x="7" y="6" width="2" height="2" fill="#fff"/><rect x="7" y="9" width="2" height="2" fill="#fff"/><rect x="10" y="3" width="2" height="2" fill="#fff"/><rect x="10" y="6" width="2" height="2" fill="#fff"/><rect x="10" y="9" width="2" height="2" fill="#fff"/><rect x="13" y="3" width="2" height="2" fill="#fff"/><rect x="13" y="6" width="2" height="2" fill="#fff"/><rect x="13" y="9" width="2" height="2" fill="#fff"/></svg>
<svg class="a" style="left:64px;top:241px" width="19" height="16"><path d="M6.5 8.5 H18 L12 15.5 H0.5 Z" fill="#ffff00" stroke="#000" stroke-width="1.2"/><rect x="0" y="14.5" width="12" height="1.5" fill="#000"/></svg>
<div class="a t" style="left:83px;top:237px;letter-spacing:-0.429px">examples</div>
<div class="a t" style="left:147.3px;top:237px;letter-spacing:-0.2px">UDO's for examples from Manual</div>
<div class="a" style="left:49px;top:261px;width:9px;height:9px;border:1px solid #9c9caa;border-radius:1px;background:linear-gradient(to bottom,#fff 0,#f4f4f8 45%,#cfcfdc 100%)"><div class="a" style="left:1px;top:3px;width:5px;height:1px;background:#000"></div><div class="a" style="left:3px;top:1px;width:1px;height:5px;background:#000"></div></div>
<svg class="a" style="left:64px;top:261px" width="16" height="16" shape-rendering="crispEdges"><rect x="1" y="0" width="8" height="1" fill="#000"/><rect x="0" y="1" width="1" height="14" fill="#000"/><rect x="8" y="1" width="1" height="1" fill="#000"/><rect x="9" y="2" width="6" height="1" fill="#000"/><rect x="15" y="3" width="1" height="10" fill="#000"/><rect x="14" y="13" width="1" height="1" fill="#000"/><rect x="1" y="14" width="13" height="1" fill="#000"/><rect x="1" y="13" width="1" height="1" fill="#000"/><rect x="1" y="1" width="7" height="1" fill="#ff0"/><rect x="1" y="2" width="8" height="1" fill="#ff0"/><rect x="1" y="3" width="14" height="10" fill="#ff0"/><rect x="2" y="13" width="12" height="1" fill="#ff0"/></svg>
<div class="a t" style="left:83px;top:257px;letter-spacing:-0.383px">filters</div>
<div class="a t" style="left:147.3px;top:257px;letter-spacing:-0.196px">Objects for filter analysis</div>
<div class="a" style="left:49px;top:281px;width:9px;height:9px;border:1px solid #9c9caa;border-radius:1px;background:linear-gradient(to bottom,#fff 0,#f4f4f8 45%,#cfcfdc 100%)"><div class="a" style="left:1px;top:3px;width:5px;height:1px;background:#000"></div><div class="a" style="left:3px;top:1px;width:1px;height:5px;background:#000"></div></div>
<svg class="a" style="left:64px;top:281px" width="16" height="16" shape-rendering="crispEdges"><rect x="1" y="0" width="8" height="1" fill="#000"/><rect x="0" y="1" width="1" height="14" fill="#000"/><rect x="8" y="1" width="1" height="1" fill="#000"/><rect x="9" y="2" width="6" height="1" fill="#000"/><rect x="15" y="3" width="1" height="10" fill="#000"/><rect x="14" y="13" width="1" height="1" fill="#000"/><rect x="1" y="14" width="13" height="1" fill="#000"/><rect x="1" y="13" width="1" height="1" fill="#000"/><rect x="1" y="1" width="7" height="1" fill="#ff0"/><rect x="1" y="2" width="8" height="1" fill="#ff0"/><rect x="1" y="3" width="14" height="10" fill="#ff0"/><rect x="2" y="13" width="12" height="1" fill="#ff0"/></svg>
<div class="a t" style="left:83px;top:277px;letter-spacing:0.033px">food</div>
<div class="a t" style="left:147.3px;top:277px;letter-spacing:-0.042px">Food objects for MW heating</div>
<div class="a" style="left:49px;top:301px;width:9px;height:9px;border:1px solid #9c9caa;border-radius:1px;background:linear-gradient(to bottom,#fff 0,#f4f4f8 45%,#cfcfdc 100%)"><div class="a" style="left:1px;top:3px;width:5px;height:1px;background:#000"></div><div class="a" style="left:3px;top:1px;width:1px;height:5px;background:#000"></div></div>
<svg class="a" style="left:64px;top:301px" width="16" height="16" shape-rendering="crispEdges"><rect x="1" y="0" width="8" height="1" fill="#000"/><rect x="0" y="1" width="1" height="14" fill="#000"/><rect x="8" y="1" width="1" height="1" fill="#000"/><rect x="9" y="2" width="6" height="1" fill="#000"/><rect x="15" y="3" width="1" height="10" fill="#000"/><rect x="14" y="13" width="1" height="1" fill="#000"/><rect x="1" y="14" width="13" height="1" fill="#000"/><rect x="1" y="13" width="1" height="1" fill="#000"/><rect x="1" y="1" width="7" height="1" fill="#ff0"/><rect x="1" y="2" width="8" height="1" fill="#ff0"/><rect x="1" y="3" width="14" height="10" fill="#ff0"/><rect x="2" y="13" width="12" height="1" fill="#ff0"/></svg>
<div class="a t" style="left:83px;top:297px;letter-spacing:0.033px">helices</div>
<div class="a t" style="left:147.3px;top:297px;letter-spacing:0.014px">Helical objects</div>
<div class="a" style="left:49px;top:321px;width:9px;height:9px;border:1px solid #9c9caa;border-radius:1px;background:linear-gradient(to bottom,#fff 0,#f4f4f8 45%,#cfcfdc 100%)"><div class="a" style="left:1px;top:3px;width:5px;height:1px;background:#000"></div><div class="a" style="left:3px;top:1px;width:1px;height:5px;background:#000"></div></div>
<svg class="a" style="left:64px;top:321px" width="16" height="16" shape-rendering="crispEdges"><rect x="1" y="0" width="8" height="1" fill="#000"/><rect x="0" y="1" width="1" height="14" fill="#000"/><rect x="8" y="1" width="1" height="1" fill="#000"/><rect x="9" y="2" width="6" height="1" fill="#000"/><rect x="15" y="3" width="1" height="10" fill="#000"/><rect x="14" y="13" width="1" height="1" fill="#000"/><rect x="1" y="14" width="13" height="1" fill="#000"/><rect x="1" y="13" width="1" height="1" fill="#000"/><rect x="1" y="1" width="7" height="1" fill="#ff0"/><rect x="1" y="2" width="8" height="1" fill="#ff0"/><rect x="1" y="3" width="14" height="10" fill="#ff0"/><rect x="2" y="13" width="12" height="1" fill="#ff0"/></svg>
<div class="a t" style="left:83px;top:317px;letter-spacing:-0.137px">junctions</div>
<div class="a t" style="left:147.3px;top:317px;letter-spacing:-0.104px">Junctions of cylinders and/or cubicoidal structures</div>
<div class="a" style="left:49px;top:341px;width:9px;height:9px;border:1px solid #9c9caa;border-radius:1px;background:linear-gradient(to bottom,#fff 0,#f4f4f8 45%,#cfcfdc 100%)"><div class="a" style="left:1px;top:3px;width:5px;height:1px;background:#000"></div><div class="a" style="left:3px;top:1px;width:1px;height:5px;background:#000"></div></div>
<svg class="a" style="left:64px;top:341px" width="16" height="16" shape-rendering="crispEdges"><rect x="1" y="0" width="8" height="1" fill="#000"/><rect x="0" y="1" width="1" height="14" fill="#000"/><rect x="8" y="1" width="1" height="1" fill="#000"/><rect x="9" y="2" width="6" height="1" fill="#000"/><rect x="15" y="3" width="1" height="10" fill="#000"/><rect x="14" y="13" width="1" height="1" fill="#000"/><rect x="1" y="14" width="13" height="1" fill="#000"/><rect x="1" y="13" width="1" height="1" fill="#000"/><rect x="1" y="1" width="7" height="1" fill="#ff0"/><rect x="1" y="2" width="8" height="1" fill="#ff0"/><rect x="1" y="3" width="14" height="10" fill="#ff0"/><rect x="2" y="13" width="12" height="1" fill="#ff0"/></svg>
<div class="a t" style="left:83px;top:337px;letter-spacing:0.0px">lenses</div>
<div class="a t" style="left:147.3px;top:337px;letter-spacing:0.16px">Lenses</div>
<div class="a" style="left:49px;top:361px;width:9px;height:9px;border:1px solid #9c9caa;border-radius:1px;background:linear-gradient(to bottom,#fff 0,#f4f4f8 45%,#cfcfdc 100%)"><div class="a" style="left:1px;top:3px;width:5px;height:1px;background:#000"></div><div class="a" style="left:3px;top:1px;width:1px;height:5px;background:#000"></div></div>
<svg class="a" style="left:64px;top:361px" width="16" height="16" shape-rendering="crispEdges"><rect x="1" y="0" width="8" height="1" fill="#000"/><rect x="0" y="1" width="1" height="14" fill="#000"/><rect x="8" y="1" width="1" height="1" fill="#000"/><rect x="9" y="2" width="6" height="1" fill="#000"/><rect x="15" y="3" width="1" height="10" fill="#000"/><rect x="14" y="13" width="1" height="1" fill="#000"/><rect x="1" y="14" width="13" height="1" fill="#000"/><rect x="1" y="13" width="1" height="1" fill="#000"/><rect x="1" y="1" width="7" height="1" fill="#ff0"/><rect x="1" y="2" width="8" height="1" fill="#ff0"/><rect x="1" y="3" width="14" height="10" fill="#ff0"/><rect x="2" y="13" width="12" height="1" fill="#ff0"/></svg>
<div class="a t" style="left:83px;top:357px;letter-spacing:-0.3px">monitors</div>
<div class="a t" style="left:147.3px;top:357px;letter-spacing:-0.14px">Objects of FD Monitor</div>
<div class="a" style="left:49px;top:381px;width:9px;height:9px;border:1px solid #9c9caa;border-radius:1px;background:linear-gradient(to bottom,#fff 0,#f4f4f8 45%,#cfcfdc 100%)"><div class="a" style="left:1px;top:3px;width:5px;height:1px;background:#000"></div><div class="a" style="left:3px;top:1px;width:1px;height:5px;background:#000"></div></div>
<svg class="a" style="left:64px;top:381px" width="16" height="16" shape-rendering="crispEdges"><rect x="1" y="0" width="8" height="1" fill="#000"/><rect x="0" y="1" width="1" height="14" fill="#000"/><rect x="8" y="1" width="1" height="1" fill="#000"/><rect x="9" y="2" width="6" height="1" fill="#000"/><rect x="15" y="3" width="1" height="10" fill="#000"/><rect x="14" y="13" width="1" height="1" fill="#000"/><rect x="1" y="14" width="13" height="1" fill="#000"/><rect x="1" y="13" width="1" height="1" fill="#000"/><rect x="1" y="1" width="7" height="1" fill="#ff0"/><rect x="1" y="2" width="8" height="1" fill="#ff0"/><rect x="1" y="3" width="14" height="10" fill="#ff0"/><rect x="2" y="13" width="12" height="1" fill="#ff0"/></svg>
<div class="a t" style="left:83px;top:377px;letter-spacing:0.025px">ovens</div>
<div class="a t" style="left:147.3px;top:377px;letter-spacing:-0.046px">Oven objects for MW heating</div>
<div class="a" style="left:49px;top:401px;width:9px;height:9px;border:1px solid #9c9caa;border-radius:1px;background:linear-gradient(to bottom,#fff 0,#f4f4f8 45%,#cfcfdc 100%)"><div class="a" style="left:1px;top:3px;width:5px;height:1px;background:#000"></div><div class="a" style="left:3px;top:1px;width:1px;height:5px;background:#000"></div></div>
<svg class="a" style="left:64px;top:401px" width="16" height="16" shape-rendering="crispEdges"><rect x="1" y="0" width="8" height="1" fill="#000"/><rect x="0" y="1" width="1" height="14" fill="#000"/><rect x="8" y="1" width="1" height="1" fill="#000"/><rect x="9" y="2" width="6" height="1" fill="#000"/><rect x="15" y="3" width="1" height="10" fill="#000"/><rect x="14" y="13" width="1" height="1" fill="#000"/><rect x="1" y="14" width="13" height="1" fill="#000"/><rect x="1" y="13" width="1" height="1" fill="#000"/><rect x="1" y="1" width="7" height="1" fill="#ff0"/><rect x="1" y="2" width="8" height="1" fill="#ff0"/><rect x="1" y="3" width="14" height="10" fill="#ff0"/><rect x="2" y="13" width="12" height="1" fill="#ff0"/></svg>
<div class="a t" style="left:83px;top:397px;letter-spacing:-0.18px">planar</div>
<div class="a t" style="left:147.3px;top:397px;letter-spacing:-0.162px">Objects for planar circuits</div>
<div class="a" style="left:49px;top:421px;width:9px;height:9px;border:1px solid #9c9caa;border-radius:1px;background:linear-gradient(to bottom,#fff 0,#f4f4f8 45%,#cfcfdc 100%)"><div class="a" style="left:1px;top:3px;width:5px;height:1px;background:#000"></div><div class="a" style="left:3px;top:1px;width:1px;height:5px;background:#000"></div></div>
<svg class="a" style="left:64px;top:421px" width="16" height="16" shape-rendering="crispEdges"><rect x="1" y="0" width="8" height="1" fill="#000"/><rect x="0" y="1" width="1" height="14" fill="#000"/><rect x="8" y="1" width="1" height="1" fill="#000"/><rect x="9" y="2" width="6" height="1" fill="#000"/><rect x="15" y="3" width="1" height="10" fill="#000"/><rect x="14" y="13" width="1" height="1" fill="#000"/><rect x="1" y="14" width="13" height="1" fill="#000"/><rect x="1" y="13" width="1" height="1" fill="#000"/><rect x="1" y="1" width="7" height="1" fill="#ff0"/><rect x="1" y="2" width="8" height="1" fill="#ff0"/><rect x="1" y="3" width="14" height="10" fill="#ff0"/><rect x="2" y="13" width="12" height="1" fill="#ff0"/></svg>
<div class="a t" style="left:83px;top:417px;letter-spacing:-0.143px">planarsp</div>
<div class="a t" style="left:147.3px;top:417px;letter-spacing:-0.175px">Objects for planar circuits with mesh snapping planes</div>
<div class="a" style="left:49px;top:441px;width:9px;height:9px;border:1px solid #9c9caa;border-radius:1px;background:linear-gradient(to bottom,#fff 0,#f4f4f8 45%,#cfcfdc 100%)"><div class="a" style="left:1px;top:3px;width:5px;height:1px;background:#000"></div><div class="a" style="left:3px;top:1px;width:1px;height:5px;background:#000"></div></div>
<svg class="a" style="left:64px;top:441px" width="16" height="16" shape-rendering="crispEdges"><rect x="1" y="0" width="8" height="1" fill="#000"/><rect x="0" y="1" width="1" height="14" fill="#000"/><rect x="8" y="1" width="1" height="1" fill="#000"/><rect x="9" y="2" width="6" height="1" fill="#000"/><rect x="15" y="3" width="1" height="10" fill="#000"/><rect x="14" y="13" width="1" height="1" fill="#000"/><rect x="1" y="14" width="13" height="1" fill="#000"/><rect x="1" y="13" width="1" height="1" fill="#000"/><rect x="1" y="1" width="7" height="1" fill="#ff0"/><rect x="1" y="2" width="8" height="1" fill="#ff0"/><rect x="1" y="3" width="14" height="10" fill="#ff0"/><rect x="2" y="13" width="12" height="1" fill="#ff0"/></svg>
<div class="a t" style="left:83px;top:437px;letter-spacing:0.0px">ports</div>
<div class="a t" style="left:147.3px;top:437px;letter-spacing:-0.234px">Objects of transmission line and lumped ports</div>
<div class="a" style="left:49px;top:461px;width:9px;height:9px;border:1px solid #9c9caa;border-radius:1px;background:linear-gradient(to bottom,#fff 0,#f4f4f8 45%,#cfcfdc 100%)"><div class="a" style="left:1px;top:3px;width:5px;height:1px;background:#000"></div><div class="a" style="left:3px;top:1px;width:1px;height:5px;background:#000"></div></div>
<svg class="a" style="left:64px;top:461px" width="16" height="16" shape-rendering="crispEdges"><rect x="1" y="0" width="8" height="1" fill="#000"/><rect x="0" y="1" width="1" height="14" fill="#000"/><rect x="8" y="1" width="1" height="1" fill="#000"/><rect x="9" y="2" width="6" height="1" fill="#000"/><rect x="15" y="3" width="1" height="10" fill="#000"/><rect x="14" y="13" width="1" height="1" fill="#000"/><rect x="1" y="14" width="13" height="1" fill="#000"/><rect x="1" y="13" width="1" height="1" fill="#000"/><rect x="1" y="1" width="7" height="1" fill="#ff0"/><rect x="1" y="2" width="8" height="1" fill="#ff0"/><rect x="1" y="3" width="14" height="10" fill="#ff0"/><rect x="2" y="13" width="12" height="1" fill="#ff0"/></svg>
<div class="a t" style="left:83px;top:457px;letter-spacing:0.275px">recwg</div>
<div class="a t" style="left:147.3px;top:457px;letter-spacing:-0.124px">Objects for rectangular waveguide circuits</div>
<div class="a" style="left:49px;top:481px;width:9px;height:9px;border:1px solid #9c9caa;border-radius:1px;background:linear-gradient(to bottom,#fff 0,#f4f4f8 45%,#cfcfdc 100%)"><div class="a" style="left:1px;top:3px;width:5px;height:1px;background:#000"></div><div class="a" style="left:3px;top:1px;width:1px;height:5px;background:#000"></div></div>
<svg class="a" style="left:64px;top:481px" width="16" height="16" shape-rendering="crispEdges"><rect x="1" y="0" width="8" height="1" fill="#000"/><rect x="0" y="1" width="1" height="14" fill="#000"/><rect x="8" y="1" width="1" height="1" fill="#000"/><rect x="9" y="2" width="6" height="1" fill="#000"/><rect x="15" y="3" width="1" height="10" fill="#000"/><rect x="14" y="13" width="1" height="1" fill="#000"/><rect x="1" y="14" width="13" height="1" fill="#000"/><rect x="1" y="13" width="1" height="1" fill="#000"/><rect x="1" y="1" width="7" height="1" fill="#ff0"/><rect x="1" y="2" width="8" height="1" fill="#ff0"/><rect x="1" y="3" width="14" height="10" fill="#ff0"/><rect x="2" y="13" width="12" height="1" fill="#ff0"/></svg>
<div class="a t" style="left:83px;top:477px;letter-spacing:0.043px">ridgedwg</div>
<div class="a t" style="left:147.3px;top:477px;letter-spacing:-0.133px">Objects for ridged waveguide</div>
</div>
<div class="a" style="left:406px;top:57px;width:17px;height:509px;background:linear-gradient(to right,#e8e8ef 0,#eeeef4 25%,#f4f4f8 50%,#fbfbfd 75%,#fff 100%)"></div>
<div class="sb" style="left:407px;top:57px;width:16px;height:17px"></div>
<svg class="a" style="left:407px;top:57px" width="16" height="17"><path d="M4 10 L8 6 L12 10" fill="none" stroke="#303030" stroke-width="2.4"/></svg>
<div class="sbh" style="left:407px;top:333px;width:16px;height:72px"></div>
<div class="a" style="left:413px;top:366px;width:5px;height:1px;background:#9898a8;box-shadow:0 2px 0 #9898a8,0 4px 0 #9898a8,0 6px 0 #9898a8"></div>
<div class="sb" style="left:407px;top:549px;width:16px;height:17px"></div>
<svg class="a" style="left:407px;top:549px" width="16" height="17"><path d="M4 6 L8 10 L12 6" fill="none" stroke="#303030" stroke-width="2.4"/></svg>
<div class="a" style="left:5px;top:566px;width:402px;height:17px;background:linear-gradient(to bottom,#e8e8f0 0,#eeeef4 30%,#fafafc 60%,#fff 100%)"></div>
<div class="sb" style="left:5px;top:566px;width:17px;height:17px"></div>
<svg class="a" style="left:5px;top:566px" width="17" height="17"><path d="M10 4 L6 8 L10 12" fill="none" stroke="#303030" stroke-width="2.4"/></svg>
<div class="sbv" style="left:81px;top:566px;width:300px;height:17px"></div>
<div class="a" style="left:227px;top:572px;width:1px;height:5px;background:#9898a8;box-shadow:2px 0 0 #9898a8,4px 0 0 #9898a8,6px 0 0 #9898a8"></div>
<div class="sb" style="left:389px;top:566px;width:17px;height:17px"></div>
<svg class="a" style="left:389px;top:566px" width="17" height="17"><path d="M7 4 L11 8 L7 12" fill="none" stroke="#303030" stroke-width="2.4"/></svg>
<div class="a" style="left:406px;top:566px;width:17px;height:17px;background:#e3dde3"></div>
<div class="a" style="left:429px;top:56px;width:501px;height:528px;background:#fff;border:1px solid #7f9db9"></div>
<svg class="a" style="left:430px;top:57px" width="150" height="120" viewBox="430 57 150 120">
<polygon points="457,89.5 496.4,70 564,82 522.7,100.8" fill="none" stroke="#8888f8" stroke-width="1"/>
<polygon points="457,152 496.4,132.5 564,144.5 522.7,163.3" fill="none" stroke="#8888f8" stroke-width="1"/>
<polygon points="457,160 496.4,140.5 564,152.5 522.7,171.3" fill="none" stroke="#f4a0a0" stroke-width="1"/>
<path d="M470.5 77.8V154.2 M470.5 77.1V154.9 M471.5 76.4V155.6 M472.5 75.7V156.3 M473.5 75.1V156.9 M474.5 74.4V157.6 M476.5 73.8V158.2 M478.5 73.2V158.8 M480.5 72.7V159.3 M482.5 72.1V159.9 M484.5 71.7V160.3 M486.5 71.2V160.8 M489.5 70.8V161.2 M492.5 70.5V161.5 M495.5 70.2V161.8 M498.5 69.9V162.1 M501.5 69.7V162.3 M504.5 69.6V162.4 M507.5 69.5V162.5 M510.5 69.5V162.5 M513.5 69.5V162.5 M516.5 69.6V162.4 M519.5 69.7V162.3 M522.5 69.9V162.1 M525.5 70.2V161.8 M528.5 70.5V161.5 M531.5 70.8V161.2 M534.5 71.2V160.8 M536.5 71.7V160.3 M538.5 72.1V159.9 M540.5 72.7V159.3 M542.5 73.2V158.8 M544.5 73.8V158.2 M546.5 74.4V157.6 M547.5 75.1V156.9 M548.5 75.7V156.3 M549.5 76.4V155.6 M550.5 77.1V154.9 M550.5 77.8V154.2" stroke="#a4a4ff" stroke-width="1" fill="none"/>
<ellipse cx="510" cy="78.5" rx="40" ry="9" fill="none" stroke="#8080ff" stroke-width="1"/>
<ellipse cx="510" cy="153.5" rx="40" ry="9" fill="none" stroke="#8080ff" stroke-width="1"/>
<path d="M471 78.5V153.5 M549 78.5V153.5" stroke="#2828ff" stroke-width="2"/>
<polygon points="457,81.5 496.4,62 564,74 522.7,92.8" fill="none" stroke="#78e078" stroke-width="1"/>
<rect x="498" y="103" width="24" height="28" fill="#fadc70"/>
<ellipse cx="510" cy="103.5" rx="12" ry="3.5" fill="#fff0a8" stroke="#f0c830" stroke-width="0.8"/>
<ellipse cx="510" cy="131" rx="12" ry="3.5" fill="#fce68a"/>
<path d="M501.5 106V133 M504.5 106V133 M507.5 106V133 M510.5 106V133 M513.5 106V133 M516.5 106V133 M519.5 106V133" stroke="#ecc040" stroke-width="1"/>
</svg>
<svg class="a" style="left:580px;top:57px" width="150" height="120" viewBox="580 57 150 120">
<polygon points="640.3,96.7 651.2,90.9 689.6,148.7 678.2,155.2" fill="#0e7040"/>
<polygon points="628.5,135.1 695.5,102.1 701.8,111.8 635.3,145.8" fill="#0e7040"/>
<polygon points="635.1,109.7 637,108.8 696.2,122.9 695.3,131.3 635.1,118.2" fill="#f07808"/>
<path d="M613.5 113.5 L679.3 80.6 L718.8 136 L651 168 Z M613.5 96.5V113.5 M679.3 64.6V80.6 M717.8 119.1 L718.8 136 M651.1 151V168" fill="none" stroke="#30e030" stroke-width="1"/>
<path d="M613.5 96.5 L679.3 64.6 L717.8 119.1 L651.1 151 Z" fill="none" stroke="#2020e8" stroke-width="1"/>
</svg>
<svg class="a" style="left:735px;top:57px" width="150" height="120" viewBox="580 57 150 120">
<polygon points="640.3,96.7 651.2,90.9 689.6,148.7 678.2,155.2" fill="#0e7040"/>
<polygon points="628.5,135.1 695.5,102.1 701.8,111.8 635.3,145.8" fill="#0e7040"/>
<polygon points="635.1,109.7 637,108.8 696.2,122.9 695.3,131.3 635.1,118.2" fill="#f07808"/>
<path d="M613.5 113.5 L679.3 80.6 L718.8 136 L651 168 Z M613.5 96.5V113.5 M679.3 64.6V80.6 M717.8 119.1 L718.8 136 M651.1 151V168" fill="none" stroke="#30e030" stroke-width="1"/>
<path d="M613.5 96.5 L679.3 64.6 L717.8 119.1 L651.1 151 Z" fill="none" stroke="#2020e8" stroke-width="1"/>
</svg>
<svg class="a" style="left:440px;top:230px" width="140" height="120" viewBox="440 230 140 120" shape-rendering="crispEdges">
<defs><pattern id="hp" width="2" height="2" patternUnits="userSpaceOnUse"><rect width="2" height="2" fill="#b4b4bc"/><rect width="1" height="1" fill="#6c6cc8"/><rect x="1" y="1" width="1" height="1" fill="#6c6cc8"/></pattern></defs>
<polygon points="527.9,238.9 572,258 572,262 539.7,290.9 532.5,287.3 518,301.8 517,317.2 493.5,340.8 457.3,322.6 457.3,313.6 480.8,289.6 487.2,291.8 504.4,274.6 504.4,264.6" fill="url(#hp)"/>
<path d="M457.3 313.6 L493.5 331 L517 307 M493.5 331 V340.8 M504.4 264.6 L536 281 L562 254 M536 281 V290" stroke="#7070b0" stroke-width="0.8" fill="none"/>
<pattern id="gp" width="2" height="2" patternUnits="userSpaceOnUse"><rect width="2" height="2" fill="#a8b8a8"/><rect width="1" height="1" fill="#40a860"/><rect x="1" y="1" width="1" height="1" fill="#40a860"/></pattern><circle cx="510.2" cy="290.4" r="8.7" fill="url(#gp)"/>
</svg>
<div class="a" style="left:451px;top:349px;width:118px;height:42px;background:#b3b4b9"></div>
<svg class="a" style="left:590px;top:230px" width="140" height="120" viewBox="590 230 140 120">
<ellipse cx="664" cy="318.5" rx="11" ry="4.5" fill="#e4e4e0"/>
<path d="M656 314 h15 v6 h-15 z" fill="#2a2ae8"/>
<path d="M659.5 314v6 M662.5 314v6 M665.5 314v6 M668.5 314v6" stroke="#9090f0" stroke-width="1"/>
<path d="M670 275.5 Q680 277 684.8 283 V310 Q683 316 672 318 H670 Z" fill="#dce8e8" stroke="#5a9a9a" stroke-width="0.8"/>
<path d="M680 279 V314 L684.8 310 V283 Z" fill="#a8cccc"/>
<path d="M674.5 277v40 M677.5 277.5v39" stroke="#b0d0d0" stroke-width="1"/>
<path d="M670 306 h15" stroke="#80b0b0" stroke-width="0.8"/>
<path d="M679.4 237.4 L719.2 269.9 L719.2 325.3 L650.2 344.3 L619.1 317.5 M679.4 237.4 V290.3 L719.2 325.3 M669.7 284.5 L719.2 269.9 M650.2 317.5 V344.3 M619.1 317.5 L679.4 290.3 M660 241 L679.4 237.4" fill="none" stroke="#7878ff" stroke-width="1"/>
</svg>
<svg class="a" style="left:740px;top:230px" width="140" height="120" viewBox="740 230 140 120">
<path d="M787.1 258.6 H832.3 C838 266 842.5 276 842.9 292 L843.4 330.8 H835.2 C834 322 829 312 822 307 C814 302 800 300.4 787.1 300.4 Z" fill="#f97b3a"/>
</svg>
<svg class="a" style="left:440px;top:400px" width="140" height="120" viewBox="440 400 140 120">
<defs><radialGradient id="lens" cx="0.22" cy="0.52" r="0.95" fx="0.18" fy="0.5">
<stop offset="0" stop-color="#ffffff"/><stop offset="0.2" stop-color="#eceef2"/><stop offset="0.45" stop-color="#b8bcc6"/><stop offset="0.75" stop-color="#8e929e"/><stop offset="1" stop-color="#5c606a"/></radialGradient></defs>
<polygon points="463.2,452.5 476.7,439.4 503,441.2 490.3,453.9" fill="#b87812"/>
<polygon points="463.2,452.5 490.3,453.9 490.3,482.9 464.1,481.1" fill="#d4901e"/>
<polygon points="490.3,453.9 503,441.2 545.6,423.1 530.2,444" fill="#7a4c08"/>
<polygon points="490.3,453.9 530.2,444 529.3,505.6 490.3,482.9" fill="#b47410"/>
<path d="M538.9 421.6 C533 426 527 445 525.7 464.4 C525.5 480 528.5 497 534.5 507.3 C546 503 554.5 488 557.5 470 C558.5 455 555 438 548 428 C545 424 541.5 421.6 538.9 421.6 Z" fill="url(#lens)"/>
</svg>
<svg class="a" style="left:600px;top:400px" width="130" height="125" viewBox="600 400 130 125">
<rect x="610" y="410" width="110" height="110" fill="#0000ff"/>
<polygon points="621.6,434.6 661.8,443.2 661.8,478.2 642.2,475.1" fill="#9c4e26" stroke="#ff8c50" stroke-width="0.8"/>
<polygon points="661.8,443.2 706,429.8 686.5,471 661.8,478.2" fill="#ac572c" stroke="#ff8c50" stroke-width="0.8"/>
<polygon points="642.2,475.1 661.8,478.2 660.7,507 641.2,501.9" fill="#c0602e" stroke="#ff8c50" stroke-width="0.8"/>
<polygon points="661.8,478.2 686.5,471 686.5,498.8 660.7,507" fill="#c86838" stroke="#ff8c50" stroke-width="0.8"/>
<polygon points="621.6,434.6 665.9,420.6 706,429.8 661.8,443.2" fill="none" stroke="#ff9050" stroke-width="2.2"/>
</svg>
<svg class="a" style="left:760px;top:400px" width="120" height="125" viewBox="760 400 120 125">
<path d="M766.2 432.9 L818.7 411.3 L872.8 427.8 L820.7 449.4 Z M766.2 432.9 V501.9 L820.7 518.4 L872.8 495.7 V427.8 M820.7 449.4 V518.4" fill="none" stroke="#ff9060" stroke-width="0.8"/>
<polygon points="794,431.9 817.6,439.1 844.4,427.8 830,467.9 830,490.6 815.6,495.7 809.4,494.7 809.4,470" fill="#0000c8"/>
<polygon points="794,431.9 820.7,420.6 844.4,427.8 817.6,439.1" fill="#1414ff"/>
<path d="M817.6 439.1 V495.7 M809.4 470 L830 467.9" stroke="#2020f0" stroke-width="0.8" fill="none"/>
<path d="M820.7 449.4 V518.4 M766.2 432.9 L820.7 449.4 L872.8 427.8" fill="none" stroke="#ff9060" stroke-width="0.8"/>
</svg>
<div class="a" style="left:472px;top:175.2px;white-space:pre;line-height:14px;letter-spacing:-0.008px">Name: cwgheat</div>
<div class="a" style="left:460.7px;top:189.2px;white-space:pre;line-height:14px;letter-spacing:-0.185px">Description: Circular</div>
<div class="a" style="left:446.1px;top:203.2px;white-space:pre;line-height:14px;letter-spacing:-0.132px">waveguide for heating with</div>
<div class="a" style="left:445.1px;top:217.2px;white-space:pre;line-height:14px;letter-spacing:-0.203px">linear or circular polarisation</div>
<div class="a" style="left:630px;top:175.2px;white-space:pre;line-height:14px;letter-spacing:-0.091px">Name: dcoup1</div>
<div class="a" style="left:611.5px;top:189.2px;white-space:pre;line-height:14px;letter-spacing:-0.064px">Description: Dielectric</div>
<div class="a" style="left:592.9px;top:203.2px;white-space:pre;line-height:14px;letter-spacing:-0.092px">waveguide 3-dB coupler with</div>
<div class="a" style="left:653px;top:217.2px;white-space:pre;line-height:14px;letter-spacing:0.0px">ports</div>
<div class="a" style="left:480px;top:349.2px;white-space:pre;line-height:14px;letter-spacing:-0.3px">Name: dielf1</div>
<div class="a" style="left:452.7px;top:363.2px;white-space:pre;line-height:14px;letter-spacing:-0.029px">Description: waveguide</div>
<div class="a" style="left:478.6px;top:377.2px;white-space:pre;line-height:14px;letter-spacing:-0.156px">dielectric filter</div>
<div class="a" style="left:632.7px;top:349.2px;white-space:pre;line-height:14px;letter-spacing:-0.108px">Name: dielres</div>
<div class="a" style="left:611.5px;top:363.2px;white-space:pre;line-height:14px;letter-spacing:-0.064px">Description: Dielectric</div>
<div class="a" style="left:593.5px;top:377.2px;white-space:pre;line-height:14px;letter-spacing:-0.155px">resonator on support, shielded</div>
<div class="a" style="left:791.7px;top:349.2px;white-space:pre;line-height:14px;letter-spacing:-0.16px">Name: flare</div>
<div class="a" style="left:755.1px;top:363.2px;white-space:pre;line-height:14px;letter-spacing:-0.185px">Description: Flare structure</div>
<div class="a" style="left:758.8px;top:377.2px;white-space:pre;line-height:14px;letter-spacing:-0.161px">prepared to be used from</div>
<div class="a" style="left:795.1px;top:391.2px;white-space:pre;line-height:14px;letter-spacing:-0.11px">vivaldi.udo</div>
<div class="a" style="left:478.9px;top:523.2px;white-space:pre;line-height:14px;letter-spacing:-0.1px">Name: holen</div>
<div class="a" style="left:449px;top:537.2px;white-space:pre;line-height:14px;letter-spacing:-0.091px">Description: Rectangular</div>
<div class="a" style="left:440.9px;top:551.2px;white-space:pre;line-height:14px;letter-spacing:-0.17px">ridged horn + lens + NTF box</div>
<div class="a" style="left:634px;top:523.2px;white-space:pre;line-height:14px;letter-spacing:-0.23px">Name: horn1</div>
<div class="a" style="left:604.8px;top:537.2px;white-space:pre;line-height:14px;letter-spacing:-0.07px">Description: Rectangular</div>
<div class="a" style="left:605.8px;top:551.2px;white-space:pre;line-height:14px;letter-spacing:-0.108px">waveguide horn (vertical)</div>
<div class="a" style="left:788.5px;top:523.2px;white-space:pre;line-height:14px;letter-spacing:-0.04px">Name: horn2</div>
<div class="a" style="left:758.8px;top:537.2px;white-space:pre;line-height:14px;letter-spacing:-0.07px">Description: Rectangular</div>
<div class="a" style="left:756.9px;top:551.2px;white-space:pre;line-height:14px;letter-spacing:-0.15px">waveguide horn in a metal</div>
<div class="a" style="left:785.1px;top:565.2px;white-space:pre;line-height:14px;letter-spacing:0.033px">block (vertical)</div>
<div class="a" style="left:912px;top:57px;width:17px;height:526px;background:linear-gradient(to right,#e8e8ef 0,#eeeef4 25%,#f4f4f8 50%,#fbfbfd 75%,#fff 100%)"></div>
<div class="sb" style="left:913px;top:57px;width:16px;height:17px"></div>
<svg class="a" style="left:913px;top:57px" width="16" height="17"><path d="M4 10 L8 6 L12 10" fill="none" stroke="#303030" stroke-width="2.4"/></svg>
<div class="sbh" style="left:913px;top:74px;width:16px;height:210px"></div>
<div class="a" style="left:919px;top:175px;width:5px;height:1px;background:#9898a8;box-shadow:0 2px 0 #9898a8,0 4px 0 #9898a8,0 6px 0 #9898a8"></div>
<div class="sb" style="left:913px;top:566px;width:16px;height:17px"></div>
<svg class="a" style="left:913px;top:566px" width="16" height="17"><path d="M4 6 L8 10 L12 6" fill="none" stroke="#303030" stroke-width="2.4"/></svg>
<div class="a" style="left:926px;top:592px;width:2px;height:2px;background:#b0b0b8"></div>
<div class="a" style="left:922px;top:596px;width:2px;height:2px;background:#b0b0b8"></div>
<div class="a" style="left:926px;top:596px;width:2px;height:2px;background:#b0b0b8"></div>
<div class="a" style="left:918px;top:600px;width:2px;height:2px;background:#b0b0b8"></div>
<div class="a" style="left:922px;top:600px;width:2px;height:2px;background:#b0b0b8"></div>
<div class="a" style="left:926px;top:600px;width:2px;height:2px;background:#b0b0b8"></div>
<div class="a" style="left:564px;top:242px;width:108px;height:76px;background:rgba(0,0,0,0.25);filter:blur(1px)"></div>
<div class="a" style="left:562px;top:240px;width:108px;height:77px;background:#fff;border:1px solid #8d8d9a"></div>
<div class="a" style="left:565px;top:268px;width:103px;height:1px;background:#a6a6b0"></div>
<div class="a mi" style="left:591.7px;top:247.2px;letter-spacing:0.03px">Draw Object</div>
<div class="a mi" style="left:591.7px;top:276.2px;letter-spacing:-0.186px">Edit UDO</div>
<div class="a mi" style="left:591.7px;top:297.2px;letter-spacing:-0.06px">Description</div>
<svg class="a" style="left:555px;top:236px" width="40" height="80" viewBox="555 236 40 80">
<path d="M562.5 243.5 V259.5 L566.3 255.8 L569.3 262.5 L572 261.3 L569.2 254.6 H574 Z" fill="#fff" stroke="#000" stroke-width="1" stroke-linejoin="miter"/>
<path d="M571 260.5 L578 249 L581.2 251 L574 262 Z" fill="#f0e020" stroke="#000" stroke-width="1.3"/>
<path d="M578 249 L579.5 246.8 L582.8 248.8 L581.2 251 Z" fill="#e02020" stroke="#000" stroke-width="1"/>
<path d="M571 260.5 L570.5 263.5 L574 262 Z" fill="#000"/>
<path d="M570.3 275 H579.3 L581.2 278 H568.4 Z" fill="#f00000"/>
<rect x="568.5" y="278.5" width="12" height="6" fill="#fff" stroke="#000" stroke-width="1"/>
<rect x="571" y="281" width="1.5" height="1.5" fill="#00b0c0"/>
<rect x="575" y="280.5" width="2.5" height="3.5" fill="#00d020"/>
<path d="M577.2 287.5 L582.5 278 L585.6 279.8 L580.2 289.2 Z" fill="#f0e020" stroke="#000" stroke-width="1.3"/>
<path d="M582.5 278 L583.7 276 L586.8 277.8 L585.6 279.8 Z" fill="#e02020" stroke="#000" stroke-width="1"/>
<path d="M577.2 287.5 L576.8 290.5 L580.2 289.2 Z" fill="#000"/>
<rect x="567" y="296" width="17" height="16" fill="#80f0ff"/>
<rect x="574.5" y="298.5" width="2" height="2" fill="#0000d0"/>
<path d="M573 302 h3.5 v6.5 h1.5 v1.5 h-5 v-1.5 h1.5 v-5 h-1.5 z" fill="#0000d0"/>
</svg>
<div class="a" style="left:732px;top:106px;width:182px;height:153px;background:#fff;border:1px solid #8d8d9a"></div>
<div class="a" style="left:735px;top:148px;width:176px;height:1px;background:#a6a6b0"></div>
<div class="a" style="left:735px;top:191px;width:176px;height:1px;background:#a6a6b0"></div>
<div class="a" style="left:735px;top:234px;width:176px;height:1px;background:#a6a6b0"></div>
<div class="a mi" style="left:760.6px;top:111.2px;letter-spacing:0.135px">Arrange left to right</div>
<div class="a" style="left:735px;top:109px;width:20px;height:18px;border:1px solid #a4a4b4;border-right-color:#ecece4;border-bottom-color:#ecece4;background:#fdfdfd"></div>
<svg class="a" style="left:735px;top:109px" width="20" height="18"><path d="M6.8 9.2 L9.9 12.3 L14.2 6.3" fill="none" stroke="#000" stroke-width="2.5"/></svg>
<div class="a mi" style="left:760.6px;top:129.2px;letter-spacing:0.135px">Arrange top to bottom</div>
<div class="a mi" style="left:759.6px;top:154.2px;letter-spacing:-0.312px">Show Name</div>
<div class="a mi" style="left:759.6px;top:172.2px;letter-spacing:-0.179px">Show Name and Description</div>
<div class="a" style="left:735px;top:170px;width:20px;height:18px;border:1px solid #a4a4b4;border-right-color:#ecece4;border-bottom-color:#ecece4;background:#fdfdfd"></div>
<svg class="a" style="left:735px;top:170px" width="20" height="18"><path d="M6.8 9.2 L9.9 12.3 L14.2 6.3" fill="none" stroke="#000" stroke-width="2.5"/></svg>
<div class="a mi" style="left:759.6px;top:197.2px;letter-spacing:0.046px">Sort Ascending</div>
<div class="a" style="left:735px;top:195px;width:20px;height:18px;border:1px solid #a4a4b4;border-right-color:#ecece4;border-bottom-color:#ecece4;background:#fdfdfd"></div>
<svg class="a" style="left:735px;top:195px" width="20" height="18"><path d="M6.8 9.2 L9.9 12.3 L14.2 6.3" fill="none" stroke="#000" stroke-width="2.5"/></svg>
<div class="a mi" style="left:759.6px;top:215.2px;letter-spacing:-0.093px">Sort Descending</div>
<div class="a mi" style="left:759.6px;top:240.2px;letter-spacing:0.071px">Set Font</div>
<svg class="a" style="left:731px;top:108px" width="14" height="22">
<path d="M1.5 1.5 V17 L5 13.5 L8 20 L10.5 19 L7.5 12.5 H12.5 Z" fill="#fff" stroke="#000" stroke-width="1"/>
</svg>
</div></body></html>
